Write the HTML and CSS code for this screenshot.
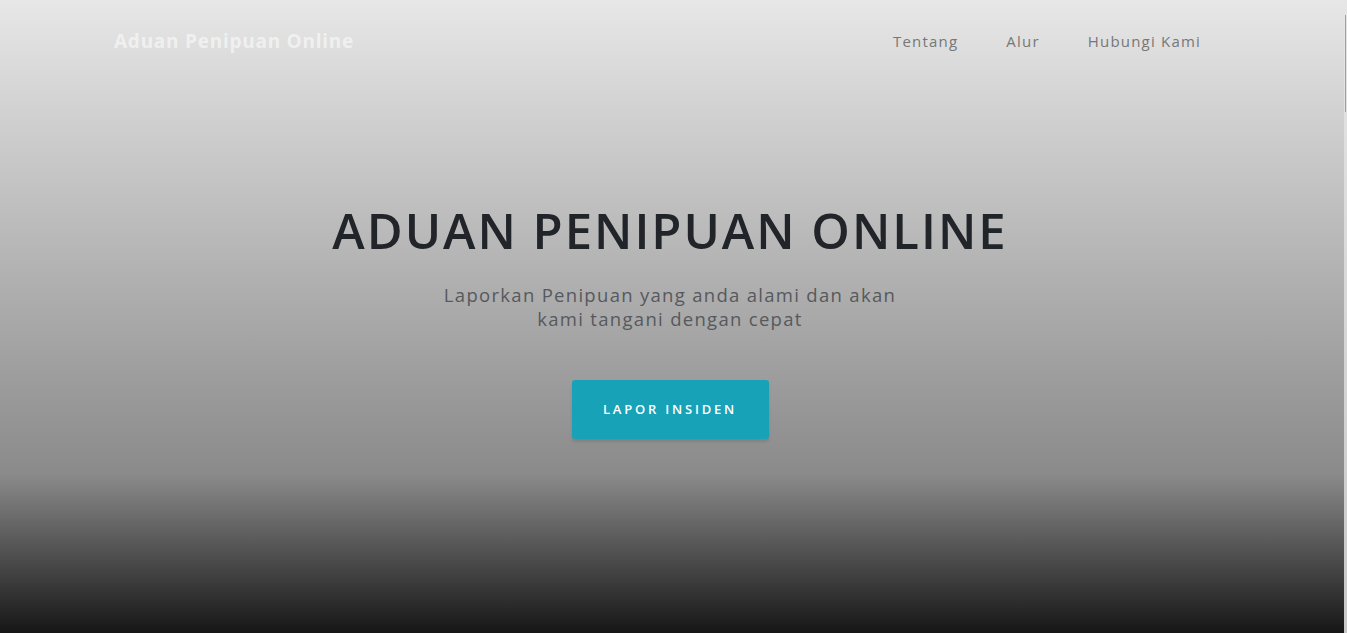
FILE: index.html
```html
<!DOCTYPE html>
<html lang="id">
<head>
<meta charset="utf-8">
<title>Aduan Penipuan Online</title>
<link rel="stylesheet" href="styles.css">
</head>
<body>
<nav class="navbar">
  <div class="container nav-inner">
    <a class="brand" href="#">Aduan Penipuan Online</a>
    <ul class="nav-links">
      <li><a href="#about">Tentang</a></li>
      <li><a href="#flow">Alur</a></li>
      <li><a href="#contact">Hubungi Kami</a></li>
    </ul>
  </div>
</nav>
<header class="masthead">
  <div class="masthead-content">
    <h1 class="title">ADUAN PENIPUAN ONLINE</h1>
    <h2 class="subtitle">Laporkan Penipuan yang anda alami dan akan kami tangani dengan cepat</h2>
    <a class="btn" href="#report">Lapor Insiden</a>
  </div>
</header>
<div class="scrollbar"><div class="thumb"></div></div>
</body>
</html>
```
FILE: styles.css
```css
html, body {
  margin: 0;
  padding: 0;
  overflow: hidden;
}
body {
  font-family: "Open Sans", "DejaVu Sans", sans-serif;
  background: #fff;
  width: 1344px;
}
.navbar {
  position: absolute;
  top: 0;
  left: 0;
  width: 1344px;
  z-index: 2;
}
.container {
  width: 1140px;
  margin: 0 auto;
  padding: 0 15px;
  box-sizing: border-box;
}
.nav-inner {
  display: flex;
  align-items: center;
  justify-content: space-between;
  height: 82px;
}
.brand {
  color: rgba(255, 255, 255, 0.55);
  font-weight: 700;
  font-size: 19px;
  letter-spacing: 0.75px;
  text-decoration: none;
  margin-left: -3px;
}
.nav-links {
  display: flex;
  list-style: none;
  margin: 0 3px 0 0;
  padding: 0;
}
.nav-links a {
  display: block;
  padding: 0 23px 0 25px;
  color: #777;
  text-decoration: none;
  font-size: 15px;
  letter-spacing: 1.2px;
}
.masthead {
  height: 633px;
  display: flex;
  justify-content: center;
  padding-right: 4px;
  box-sizing: border-box;
  background: linear-gradient(to bottom, rgba(22,22,22,0.1) 0%, rgba(22,22,22,0.5) 75%, #161616 100%);
}
.masthead-content {
  display: flex;
  flex-direction: column;
  align-items: center;
  padding-top: 200px;
}
.title {
  margin: 0;
  font-size: 49px;
  line-height: 60px;
  font-weight: 600;
  color: #212529;
  letter-spacing: 2px;
}
.subtitle {
  margin: 23px 0 0;
  width: 480px;
  text-align: center;
  font-weight: 400;
  font-size: 18.5px;
  line-height: 24px;
  letter-spacing: 1.3px;
  color: #56595d;
}
.btn {
  margin-top: 49px;
  display: block;
  width: 197px;
  height: 59px;
  box-sizing: border-box;
  line-height: 59px;
  text-align: center;
  background: #17a2b8;
  color: #fff;
  border-radius: 3px;
  text-decoration: none;
  text-transform: uppercase;
  font-size: 13px;
  font-weight: 600;
  letter-spacing: 2.8px;
  box-shadow: 0 3px 3px rgba(0, 0, 0, 0.1);
}
.scrollbar {
  position: fixed;
  top: 0;
  right: 0;
  width: 3px;
  height: 633px;
  background: linear-gradient(to bottom, #e6e6e6, #c8c8c8);
}
.thumb {
  margin: 15px 0 0 1px;
  width: 1px;
  height: 97px;
  background: #a0a0a0;
}
```
